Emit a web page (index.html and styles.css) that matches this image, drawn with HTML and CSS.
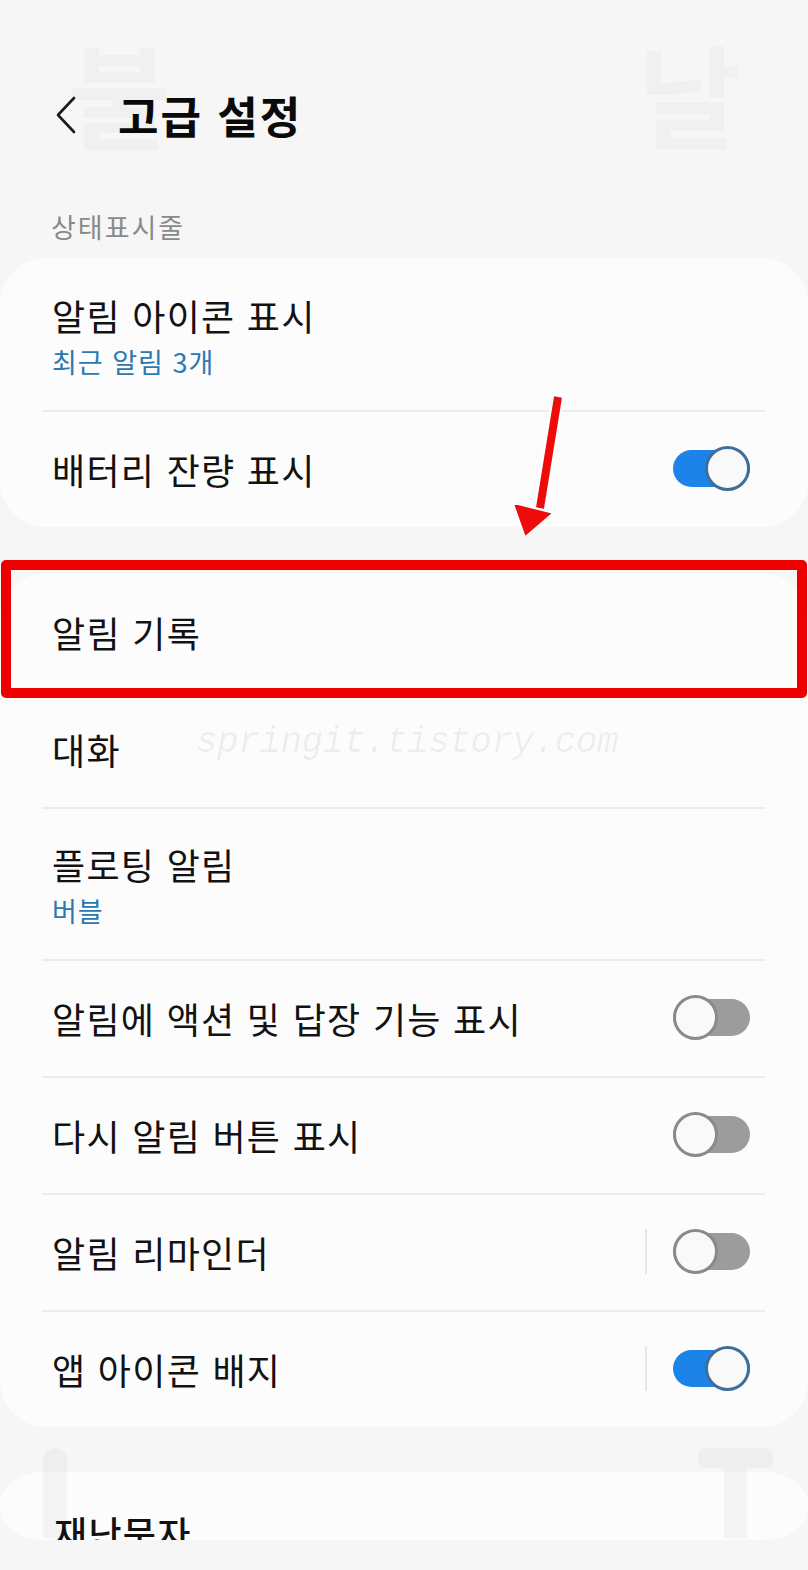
FILE: index.html
```html
<!DOCTYPE html>
<html lang="ko">
<head>
  <meta charset="UTF-8">
  <title>고급 설정</title>
  <link rel="stylesheet" href="styles.css">
</head>
<body>

  <!-- 상단 바 -->
  <div class="appbar">
    <svg class="back" width="22" height="40" viewBox="0 0 22 40">
      <path d="M19 3 L3 20 L19 37" fill="none" stroke="#1a1a1a" stroke-width="2.6" stroke-linecap="round" stroke-linejoin="round"/>
    </svg>
    <div class="title">고급 설정</div>
  </div>

  <div class="section-label">상태표시줄</div>

  <div class="card">
    <div class="row tall">
      <div class="row-text">
        <div class="label">알림 아이콘 표시</div>
        <div class="sub">최근 알림 3개</div>
      </div>
    </div>
    <div class="row">
      <div class="label">배터리 잔량 표시</div>
      <div class="switch on"><span class="thumb"></span></div>
    </div>
  </div>

  <div class="card card-gap">
    <div class="row">
      <div class="label">알림 기록</div>
    </div>
    <div class="row">
      <div class="label">대화</div>
    </div>
    <div class="row tall">
      <div class="row-text">
        <div class="label">플로팅 알림</div>
        <div class="sub">버블</div>
      </div>
    </div>
    <div class="row">
      <div class="label">알림에 액션 및 답장 기능 표시</div>
      <div class="switch"><span class="thumb"></span></div>
    </div>
    <div class="row">
      <div class="label">다시 알림 버튼 표시</div>
      <div class="switch"><span class="thumb"></span></div>
    </div>
    <div class="row">
      <div class="label">알림 리마인더</div>
      <div class="switch-wrap">
        <span class="vbar"></span>
        <div class="switch"><span class="thumb"></span></div>
      </div>
    </div>
    <div class="row">
      <div class="label">앱 아이콘 배지</div>
      <div class="switch-wrap">
        <span class="vbar"></span>
        <div class="switch on"><span class="thumb"></span></div>
      </div>
    </div>
  </div>

  <div class="card card-gap last">
    <div class="label cut">재난문자</div>
  </div>

  <!-- 캡처 위에 얹힌 표시들 -->
  <div class="mark-box"></div>
  <svg class="mark-arrow" width="70" height="160" viewBox="0 0 70 160">
    <path d="M60 17 L42 128" stroke="#fff" stroke-width="13" stroke-linecap="round" fill="none" opacity="0.8"/>
    <path d="M60 17 L42 128" stroke="#ee0b0b" stroke-width="8" fill="none"/>
    <path d="M15 123 L55 133 L27 157 Z" fill="#ee0b0b" stroke="#fff" stroke-width="1.5" stroke-linejoin="round"/>
  </svg>

  <div class="wm wm-left">불</div>
  <div class="wm wm-right">날</div>
  <div class="wm-text">springit.tistory.com</div>
  <span class="wm-bar"></span>
  <span class="wm-t-top"></span>
  <span class="wm-t-stem"></span>

</body>
</html>
```

FILE: styles.css
```css
* {
  box-sizing: border-box;
}

body {
  margin: 0;
  width: 808px;
  height: 1570px;
  overflow: hidden;
  position: relative;
  background: #f6f6f6;
  font-family: "Noto Sans CJK KR", "Noto Sans", sans-serif;
  color: #121212;
}

.appbar {
  display: flex;
  align-items: center;
  gap: 41px;
  height: 48px;
  margin-top: 91px;
  padding-left: 55px;
}

.title {
  font-size: 44px;
  font-weight: 700;
  line-height: 48px;
  letter-spacing: 2px;
  color: #0a0a0a;
}

.section-label {
  margin-top: 73px;
  padding-left: 51px;
  font-size: 27px;
  line-height: 30px;
  letter-spacing: 2px;
  color: #8a8a8a;
}

.card {
  margin-top: 16px;
  background: #fcfcfc;
  border-radius: 46px;
}

.card-gap {
  margin-top: 46px;
}

.row {
  position: relative;
  display: flex;
  align-items: center;
  justify-content: space-between;
  height: 117px;
  padding: 0 58px 0 52px;
}

.row.tall {
  height: 152px;
}

.row + .row::before {
  content: "";
  position: absolute;
  top: 0;
  left: 42px;
  right: 43px;
  height: 2px;
  background: #ececec;
}

.label {
  font-size: 36px;
  line-height: 40px;
  letter-spacing: 1.3px;
}

.sub {
  margin-top: 11px;
  font-size: 27px;
  line-height: 32px;
  letter-spacing: 1px;
  color: #2c78b1;
}

.row-text {
  padding-top: 4px;
}

.switch-wrap {
  display: flex;
  align-items: center;
  gap: 26px;
}

.vbar {
  width: 2px;
  height: 45px;
  background: #e6e6e6;
}

.switch {
  position: relative;
  width: 77px;
  height: 37px;
  border-radius: 19px;
  background: #9c9c9c;
}

.switch .thumb {
  position: absolute;
  top: -4px;
  left: 0;
  width: 45px;
  height: 45px;
  border-radius: 50%;
  background: #f9f9f9;
  border: 3px solid #8a8a8a;
}

.switch.on {
  background: #1c83e9;
}

.switch.on .thumb {
  left: auto;
  right: 0;
  border-color: #3d6f98;
}

.last {
  height: 68px;
  margin-top: 45px;
  border-radius: 44px / 32px;
  overflow: hidden;
  padding: 40px 0 0 54px;
}

.cut {
  font-weight: 500;
}

/* 빨간 강조 표시 */
.mark-box {
  position: absolute;
  top: 560px;
  left: 1px;
  width: 806px;
  height: 138px;
  border: 10px solid #ef0000;
  border-radius: 5px;
}

.mark-arrow {
  position: absolute;
  top: 380px;
  left: 498px;
}

/* 흐린 워터마크 */
.wm {
  position: absolute;
  top: 36px;
  font-size: 112px;
  font-weight: 700;
  line-height: 1;
  color: rgba(0, 0, 0, 0.025);
}

.wm-left {
  left: 68px;
}

.wm-right {
  left: 638px;
}

.wm-text {
  position: absolute;
  top: 722px;
  left: 196px;
  font-family: "Liberation Mono", monospace;
  font-style: italic;
  font-size: 36px;
  letter-spacing: -0.5px;
  color: rgba(0, 0, 0, 0.06);
}

.wm-bar,
.wm-t-top,
.wm-t-stem {
  position: absolute;
  background: rgba(0, 0, 0, 0.03);
}

.wm-bar {
  top: 1448px;
  left: 43px;
  width: 24px;
  height: 90px;
  border-radius: 12px 12px 0 0;
}

.wm-t-top {
  top: 1448px;
  left: 698px;
  width: 75px;
  height: 20px;
  border-radius: 8px;
}

.wm-t-stem {
  top: 1468px;
  left: 724px;
  width: 23px;
  height: 70px;
}
```
